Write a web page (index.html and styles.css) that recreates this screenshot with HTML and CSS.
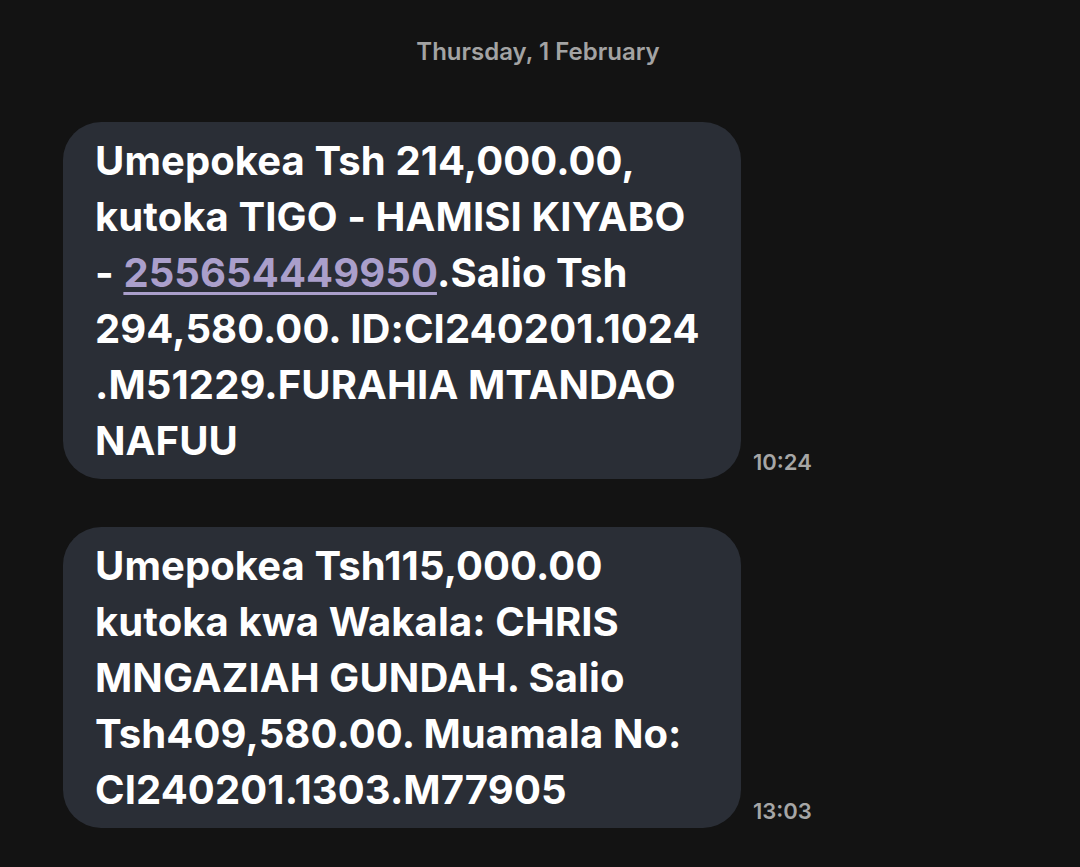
FILE: index.html
```html
<!DOCTYPE html>
<html lang="sw">
<head>
  <meta charset="UTF-8" />
  <meta name="viewport" content="width=device-width, initial-scale=1" />
  <title>Messages</title>
  <link rel="stylesheet" href="styles.css">
</head>
<body>
  <div class="thread">
    <div class="day">Thursday, 1 February</div>

    <div class="row">
      <div class="bubble">
        Umepokea Tsh 214,000.00,<br>
        kutoka TIGO - HAMISI KIYABO<br>
        - <a class="num" href="#">255654449950</a>.Salio Tsh<br>
        294,580.00. ID:CI240201.1024<br>
        .M51229.FURAHIA MTANDAO<br>
        NAFUU
      </div>
      <span class="time">10:24</span>
    </div>

    <div class="row">
      <div class="bubble">
        Umepokea Tsh115,000.00<br>
        kutoka kwa Wakala: CHRIS<br>
        MNGAZIAH GUNDAH. Salio<br>
        Tsh409,580.00. Muamala No:<br>
        CI240201.1303.M77905
      </div>
      <span class="time">13:03</span>
    </div>
  </div>
</body>
</html>
```

FILE: styles.css
```css
html, body {
  margin: 0;
  padding: 0;
  background: #131313;
}
body {
  font-family: Inter, Roboto, sans-serif;
  color: #fff;
  height: 867px;
  overflow: hidden;
}
.thread {
  padding: 36px 0 0 63px;
}
.day {
  width: 950px;
  text-align: center;
  font-size: 24px;
  font-weight: 600;
  color: #a3a3a3;
  line-height: 32px;
  margin-bottom: 54px;
}
.row {
  display: flex;
  align-items: flex-end;
  gap: 12px;
  margin-bottom: 48px;
}
.bubble {
  width: 614px;
  background: #2a2e36;
  border-radius: 38px;
  padding: 11px 32px 10px;
  font-size: 40px;
  font-weight: bold;
  line-height: 56px;
  letter-spacing: 0.1px;
  white-space: nowrap;
}
.num {
  color: #aa9fcb;
  text-decoration: underline;
  text-underline-offset: 5px;
  text-decoration-thickness: 3px;
}
.time {
  font-size: 22px;
  font-weight: 600;
  color: #a6a6a6;
  padding-bottom: 4px;
}
```
